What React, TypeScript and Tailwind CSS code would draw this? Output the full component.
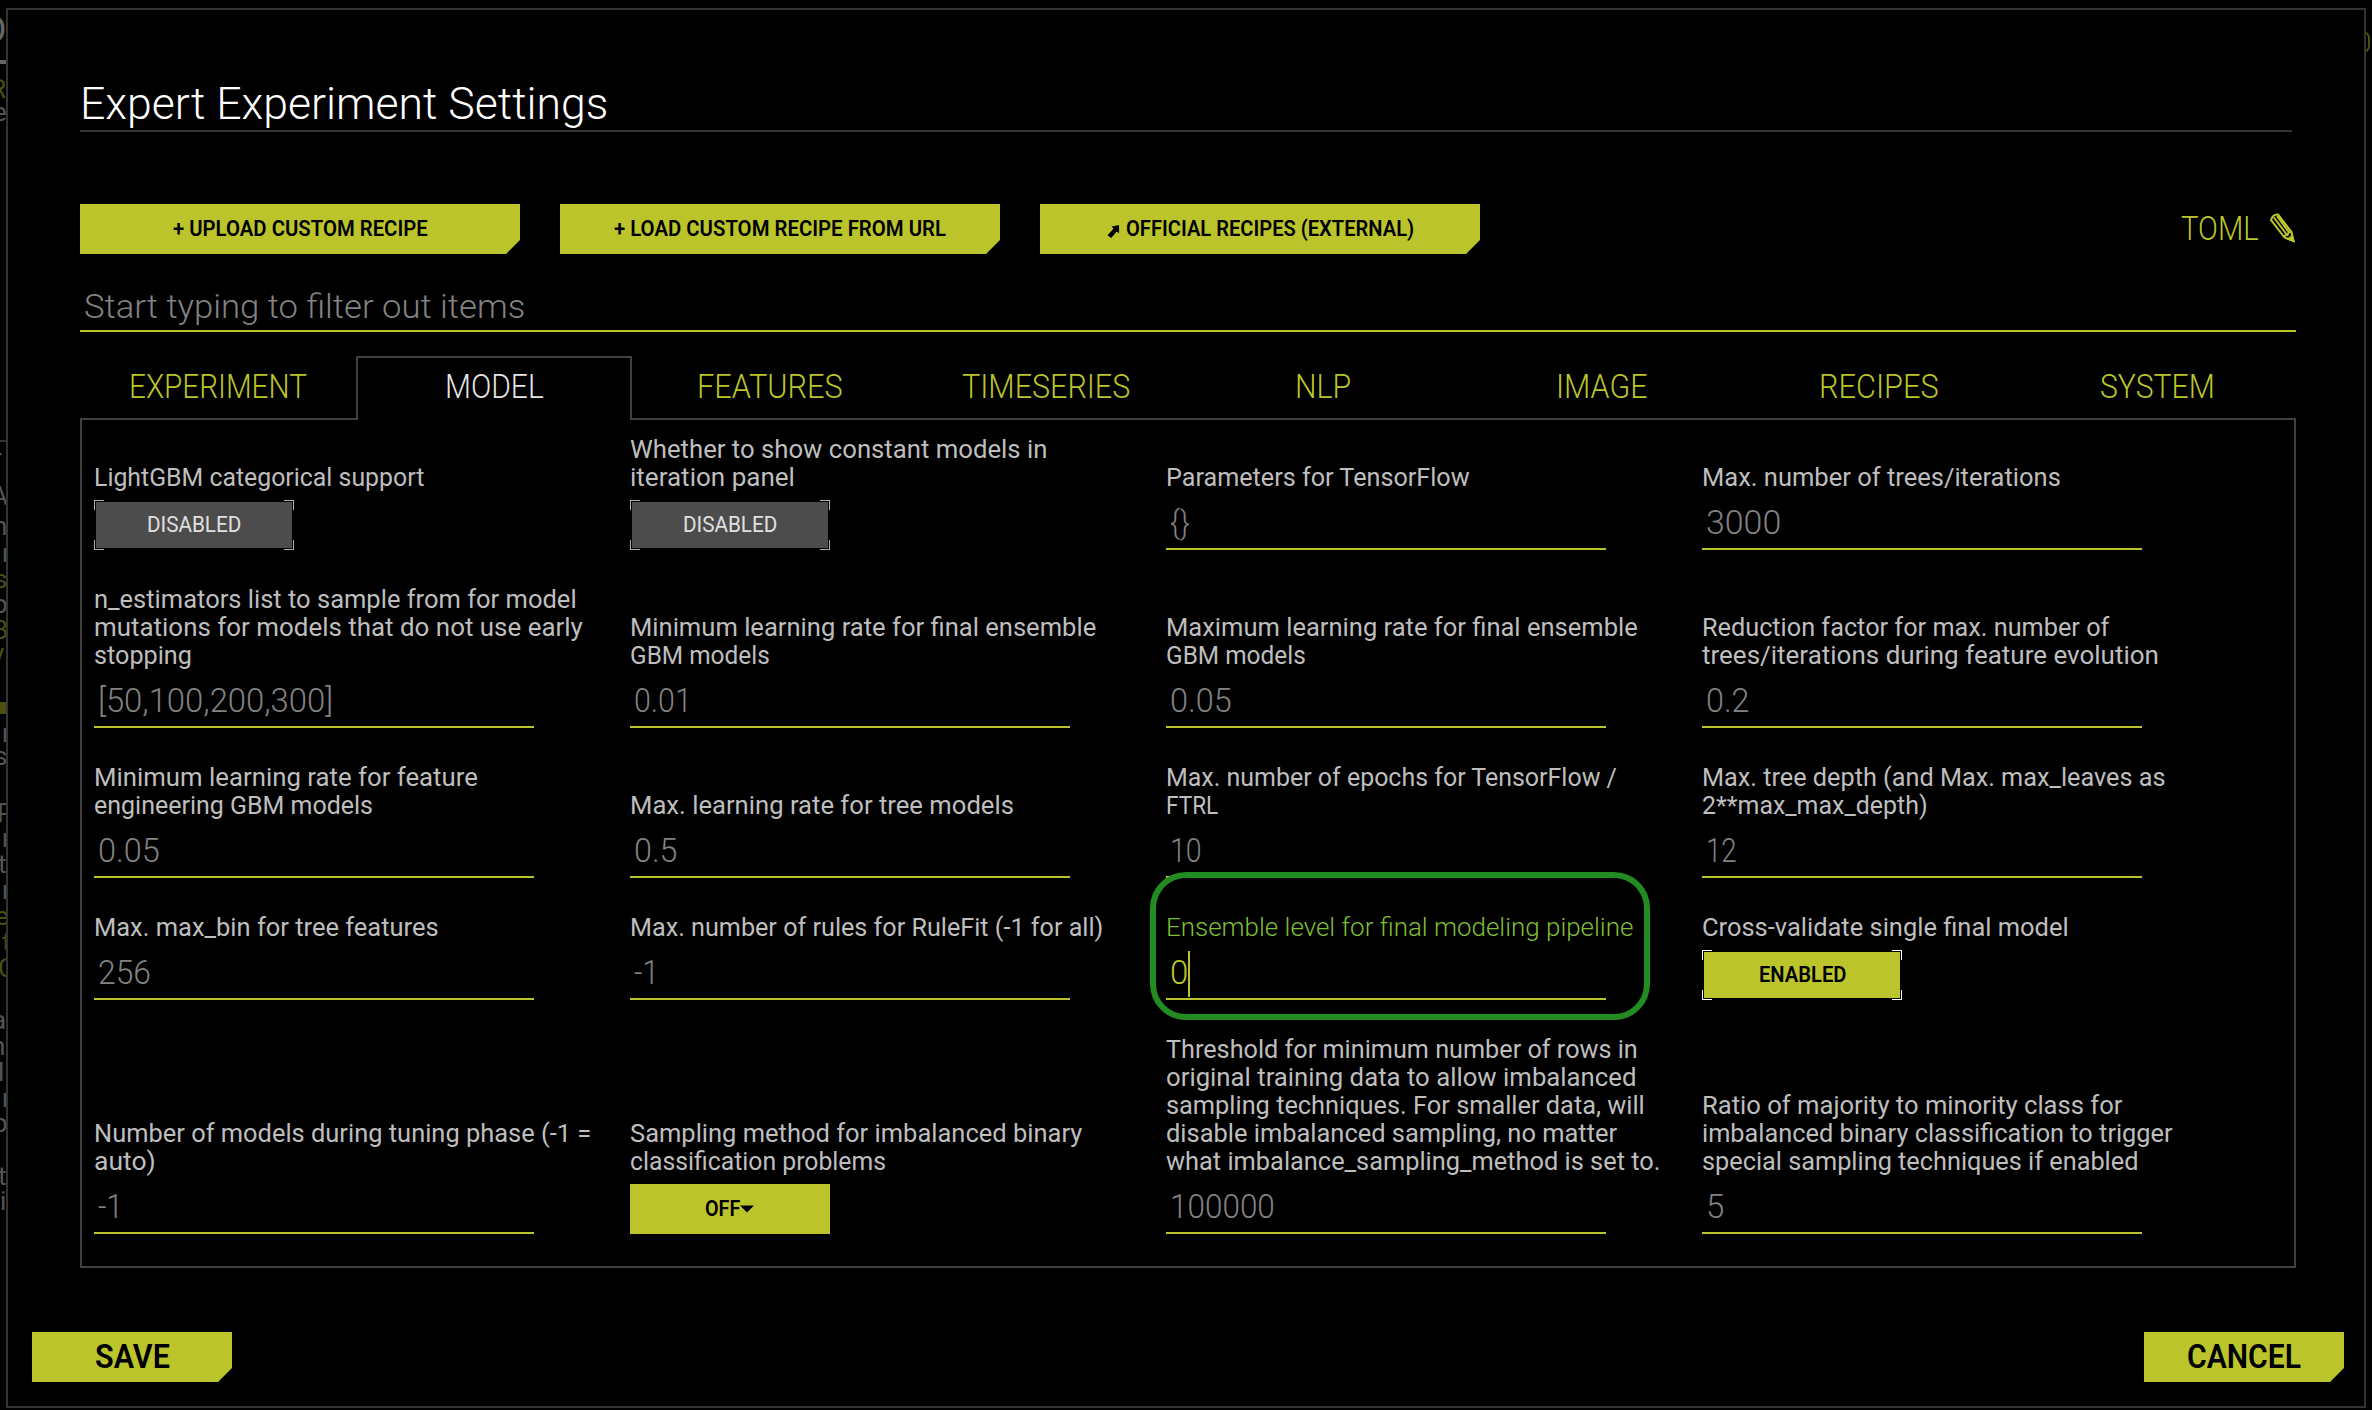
import { useLayoutEffect, useRef, useState } from "react";

type Line = [text: string, width: number];

/** One line of text, condensed or widened to the given width. */
function Fit({ line, className = "" }: { line: Line; className?: string }) {
  const ref = useRef<HTMLSpanElement>(null);
  const [scale, setScale] = useState(1);
  useLayoutEffect(() => {
    const w = ref.current?.offsetWidth ?? 0;
    if (w) setScale(line[1] / w);
  }, [line]);
  return (
    <span className={`block ${className}`} style={{ width: line[1] }}>
      <span ref={ref} className="inline-block origin-left whitespace-pre align-top" style={{ transform: `scaleX(${scale})` }}>
        {line[0]}
      </span>
    </span>
  );
}

type Field = {
  label: Line[];
  value?: Line;
  toggle?: "on" | "off";
  select?: boolean;
  focus?: boolean;
};

const ROWS: Field[][] = [
  [
    { label: [["LightGBM categorical support", 330]], toggle: "off" },
    { label: [["Whether to show constant models in", 417], ["iteration panel", 165]], toggle: "off" },
    { label: [["Parameters for TensorFlow", 304]], value: ["{}", 20] },
    { label: [["Max. number of trees/iterations", 359]], value: ["3000", 75] },
  ],
  [
    {
      label: [
        ["n_estimators list to sample from for model", 483],
        ["mutations for models that do not use early", 489],
        ["stopping", 98],
      ],
      value: ["[50,100,200,300]", 235],
    },
    { label: [["Minimum learning rate for final ensemble", 466], ["GBM models", 140]], value: ["0.01", 58] },
    { label: [["Maximum learning rate for final ensemble", 472], ["GBM models", 140]], value: ["0.05", 62] },
    { label: [["Reduction factor for max. number of", 407], ["trees/iterations during feature evolution", 457]], value: ["0.2", 44] },
  ],
  [
    { label: [["Minimum learning rate for feature", 384], ["engineering GBM models", 279]], value: ["0.05", 62] },
    { label: [["Max. learning rate for tree models", 384]], value: ["0.5", 44] },
    { label: [["Max. number of epochs for TensorFlow /", 451], ["FTRL", 52]], value: ["10", 32] },
    { label: [["Max. tree depth (and Max. max_leaves as", 464], ["2**max_max_depth)", 226]], value: ["12", 31] },
  ],
  [
    { label: [["Max. max_bin for tree features", 345]], value: ["256", 53] },
    { label: [["Max. number of rules for RuleFit (-1 for all)", 473]], value: ["-1", 25] },
    { label: [["Ensemble level for final modeling pipeline", 467]], value: ["0", 18], focus: true },
    { label: [["Cross-validate single final model", 367]], toggle: "on" },
  ],
  [
    { label: [["Number of models during tuning phase (-1 =", 497], ["auto)", 62]], value: ["-1", 25] },
    { label: [["Sampling method for imbalanced binary", 452], ["classification problems", 256]], select: true },
    {
      label: [
        ["Threshold for minimum number of rows in", 472],
        ["original training data to allow imbalanced", 470],
        ["sampling techniques. For smaller data, will", 479],
        ["disable imbalanced sampling, no matter", 451],
        ["what imbalance_sampling_method is set to.", 494],
      ],
      value: ["100000", 105],
    },
    {
      label: [
        ["Ratio of majority to minority class for", 420],
        ["imbalanced binary classification to trigger", 471],
        ["special sampling techniques if enabled", 436],
      ],
      value: ["5", 18],
    },
  ],
];

const TABS: Line[] = [
  ["EXPERIMENT", 178],
  ["MODEL", 99],
  ["FEATURES", 146],
  ["TIMESERIES", 168],
  ["NLP", 56],
  ["IMAGE", 91],
  ["RECIPES", 120],
  ["SYSTEM", 115],
];

/** Ends of the lines of the page that lies behind the dialog: glyph, baseline, x, olive. */
const BEHIND: [string, number, number, boolean][] = [
  ["R", 98, -10, true],
  ["e", 121, -7, false],
  ["r", 467, -7, false],
  ["A", 505, -9, false],
  ["n", 535, -7, false],
  ["r", 562, 2, false],
  ["s", 588, -6, true],
  ["p", 613, -7, false],
  ["B", 639, -8, true],
  ["y", 662, -8, true],
  ["r", 742, 2, false],
  ["s", 765, -6, false],
  ["P", 822, -3, false],
  ["r", 847, 2, false],
  ["t", 873, -2, false],
  ["r", 899, 2, false],
  ["e", 925, -5, true],
  ["t", 951, 2, true],
  ["C", 977, -2, true],
  ["a", 1029, -8, false],
  ["n", 1055, -9, false],
  ["l", 1081, -2, false],
  ["r", 1107, 2, false],
  ["p", 1132, -7, false],
  ["t", 1185, -2, false],
  ["i", 1210, 0, false],
];

function Toggle({ on }: { on: boolean }) {
  const edge = on ? "border-white" : "border-[#b0b0b0]";
  return (
    <div className="relative h-[50px] w-[200px] p-[2px]">
      <div className={`flex h-full items-center justify-center text-[22px] ${on ? "bg-[#bbc52b] font-semibold text-black" : "bg-[#4c4c4c] text-[#e0e0e0]"}`}>
        <Fit line={on ? ["ENABLED", 87] : ["DISABLED", 94]} className="-mt-[2px]" />
      </div>
      <i className={`absolute left-0 top-0 size-[10px] border-l border-t ${edge}`} />
      <i className={`absolute right-0 top-0 size-[10px] border-r border-t ${edge}`} />
      <i className={`absolute bottom-0 left-0 size-[10px] border-b border-l ${edge}`} />
      <i className={`absolute bottom-0 right-0 size-[10px] border-b border-r ${edge}`} />
    </div>
  );
}

function Control({ f }: { f: Field }) {
  if (f.toggle) return <Toggle on={f.toggle === "on"} />;
  if (f.select)
    return (
      <div className="flex h-[50px] w-[200px] items-center justify-center bg-[#bbc52b] pr-px text-[22px] font-semibold text-black">
        <Fit line={["OFF", 35]} className="-mt-[2px]" />
        <svg width="14" height="8" viewBox="0 0 14 8"><path d="M0 0.500h14L7 7.500z" /></svg>
      </div>
    );
  return (
    <div className={`flex h-[50px] w-[440px] items-center border-b-2 border-[#bbc52b] pl-[4px] text-[33px] font-light leading-[48px] ${f.focus ? "text-[#bbc52b]" : "text-[#828282]"}`}>
      {f.value && <Fit line={f.value} className="-mt-[2px]" />}
      {f.focus && <i className="h-[46px] w-[2px] bg-[#bbc52b]" />}
    </div>
  );
}

function CutButton({ children, className }: { children: React.ReactNode; className: string }) {
  return (
    <button className={`flex h-[50px] items-center justify-center bg-[#bbc52b] font-semibold text-black [clip-path:polygon(0_0,100%_0,100%_calc(100%-14px),calc(100%-14px)_100%,0_100%)] ${className}`}>
      {children}
    </button>
  );
}

function PageBehind() {
  return (
    <>
      <div className="absolute left-0 top-0 h-full w-[6px] overflow-hidden text-[26px] leading-[20px]">
        <span className="absolute -left-[19px] top-[8px] text-[37px] leading-[44px] text-[#666666]">O</span>
        <i className="absolute left-0 top-[60px] h-[4px] w-full bg-[#666666]" />
        <i className="absolute left-0 top-[440px] h-[2px] w-full bg-[#333333]" />
        <i className="absolute left-0 top-[702px] h-[12px] w-full bg-[#4b4f11]" />
        {BEHIND.map(([ch, y, x, olive]) => (
          <span key={y} className={`absolute ${olive ? "text-[#4b4f11]" : "text-[#555555]"}`} style={{ top: y - 19, left: x }}>
            {ch}
          </span>
        ))}
      </div>
      <div className="absolute right-0 top-0 h-[100px] w-[6px] overflow-hidden">
        <i className="absolute right-[2px] top-[31px] h-[22px] w-[16px] rounded-[7px] border-2 border-[#4b4f11]" />
      </div>
    </>
  );
}

export default function App() {
  return (
    <div className="relative h-[1410px] w-[2372px] overflow-hidden bg-black pl-[6px] pt-[8px] font-['Roboto',sans-serif]">
      <PageBehind />
      <div className="flex h-[1400px] w-[2360px] flex-col border-2 border-[#333333] bg-black">
        <h1 className="ml-[72px] flex h-[122px] w-[2212px] items-end border-b-2 border-[#333333] text-[45px] leading-[50px] font-[350] text-white">
          <Fit line={["Expert Experiment Settings", 528]} className="mb-px" />
        </h1>
        <div className="ml-[72px] mt-[72px] flex w-[2216px] gap-[40px] text-[22px]">
          <CutButton className="w-[440px]"><Fit line={["+ UPLOAD CUSTOM RECIPE", 255]} className="-mt-[2px]" /></CutButton>
          <CutButton className="w-[440px]"><Fit line={["+ LOAD CUSTOM RECIPE FROM URL", 332]} className="-mt-[2px]" /></CutButton>
          <CutButton className="w-[440px] gap-[6px]">
            <svg width="13" height="13" viewBox="0 0 14 14" className="mt-[4px]"><path d="M5 1.500L13 0v9L10.500 7 4.500 14 0.500 11 7 4z" /></svg>
            <Fit line={["OFFICIAL RECIPES (EXTERNAL)", 288]} className="-mt-[2px]" />
          </CutButton>
          <div className="ml-auto flex items-center gap-[10px] text-[33px] font-light leading-[50px] text-[#bbc52b]">
            <Fit line={["TOML", 78]} />
            <svg width="27" height="30" viewBox="0 0 27 30" className="-mt-[3px]" fill="none" stroke="#bbc52b" strokeWidth="2">
              <path d="M2 7Q4 1 9 1.500L22.500 19 24.500 28 15.500 24.500zM5 4.500L18 22M8 3L20.500 20M15.500 24.500Q16 21 18.500 22 19 18.500 22.500 19" />
              <path d="M19.500 26l3.500-3 1.500 5z" fill="#bbc52b" />
            </svg>
          </div>
        </div>
        <div className="ml-[72px] mt-[26px] h-[52px] w-[2216px] border-b-2 border-[#bbc52b] pl-[4px] text-[33px] font-light leading-[54px] text-[#828282]">
          <Fit line={["Start typing to filter out items", 441]} />
        </div>
        <nav className="z-10 ml-[72px] mt-[24px] flex h-[64px] w-[2216px] text-[33px] font-[350] leading-[58px] text-[#bbc52b]">
          {TABS.map((t, i) => (
            <div
              key={t[0]}
              className={`flex justify-center ${i < 4 ? "w-[276px]" : "w-[278px]"} ${
                i === 1 ? "border-x-2 border-t-2 border-[#404040] bg-black text-[#e6e6e6]" : "border-b-2 border-[#404040] pt-[2px]"
              }`}
            >
              <Fit line={t} />
            </div>
          ))}
        </nav>
        <main className="ml-[72px] flex h-[848px] w-[2216px] flex-col gap-[36px] border-x-2 border-b-2 border-[#404040] pl-[12px] pt-[16px]">
          {ROWS.map((row, r) => (
            <div key={r} className="grid grid-cols-[536px_536px_536px_536px] items-end">
              {row.map((f, c) => (
                <div key={c} className="relative flex flex-col">
                  <div className={`-mt-px mb-[9px] text-[26.500px] leading-[28px] ${f.focus ? "font-light text-[#7fbf35]" : "text-[#bebebe]"}`}>
                    {f.label.map((l, k) => (
                      <Fit key={k} line={l} />
                    ))}
                  </div>
                  <Control f={f} />
                  {f.focus && <div className="absolute -left-[16px] -top-[42px] h-[148px] w-[500px] rounded-[36px] border-[6px] border-[#228b22]" />}
                </div>
              ))}
            </div>
          ))}
        </main>
        <footer className="mt-[64px] flex justify-between pl-[24px] pr-[20px] text-[33px]">
          <CutButton className="w-[200px]"><Fit line={["SAVE", 75]} /></CutButton>
          <CutButton className="w-[200px]"><Fit line={["CANCEL", 114]} /></CutButton>
        </footer>
      </div>
    </div>
  );
}
